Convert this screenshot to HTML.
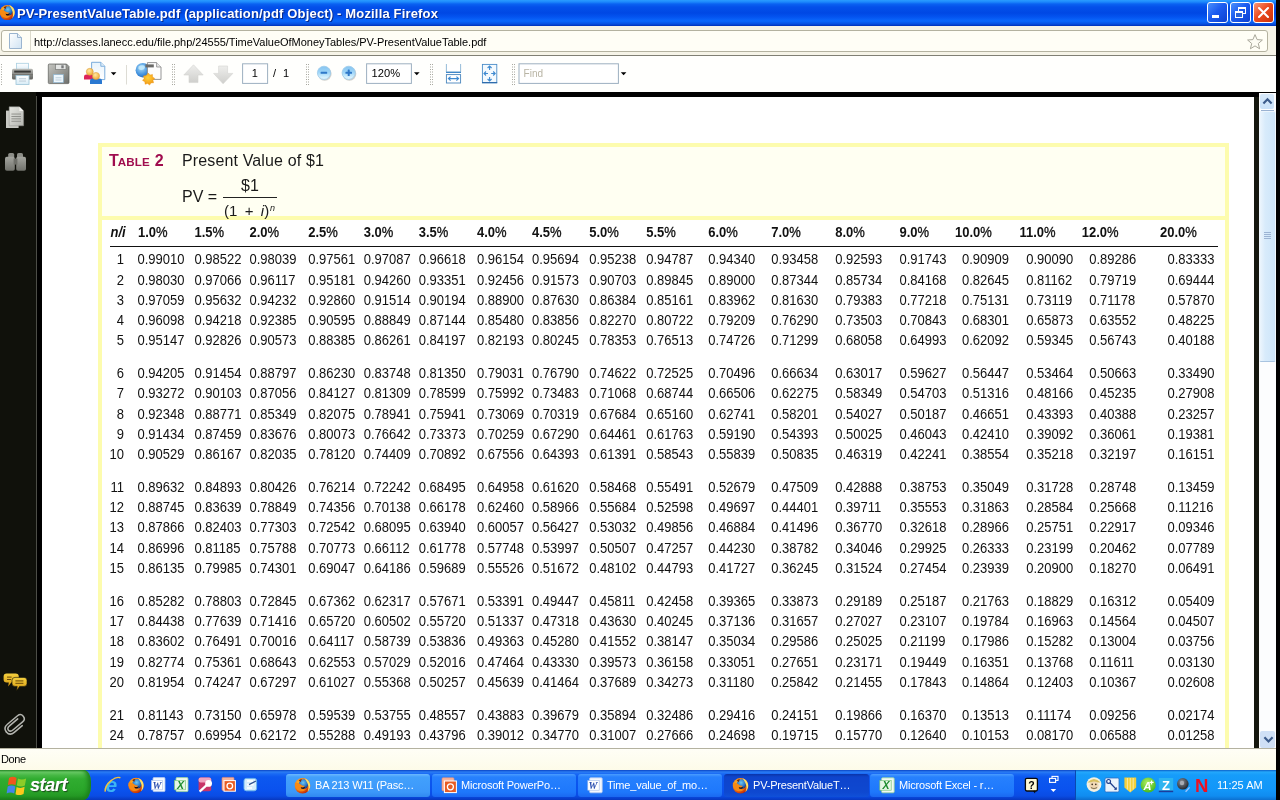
<!DOCTYPE html>
<html lang="en">
<head>
<meta charset="utf-8">
<title>PV-PresentValueTable.pdf (application/pdf Object) - Mozilla Firefox</title>
<style>
*{box-sizing:border-box;margin:0;padding:0}
html,body{width:1280px;height:800px;overflow:hidden;background:#000}
body{position:relative;font-family:"Liberation Sans",sans-serif;font-size:11px;color:#000}
.abs{position:absolute}
#win{position:absolute;left:0;top:0;width:1276px;height:770px;background:#fdfdf8;overflow:hidden}
#titlebar{position:absolute;left:0;top:0;width:1276px;height:26px;
 background:linear-gradient(to bottom,#2a9cff 0,#1c88fc 2px,#0a62f2 4px,#0450ea 7px,#0048e4 13px,#0454f0 17px,#0a68fc 21px,#0650e0 24px,#0030b8 26px)}
#title{position:absolute;left:17px;top:5.6px;height:16px;line-height:16px;color:#fff;font-weight:bold;font-size:13px;white-space:nowrap;letter-spacing:0.165px;text-shadow:1px 1px 0 #0a2a8a}
.wb{position:absolute;top:2px;width:21px;height:21px;border:1px solid #fff;border-radius:3px;
 background:linear-gradient(135deg,#4a90fc 0,#1c5cf0 45%,#0c40d0 100%)}
#wclose{background:linear-gradient(135deg,#f89878 0,#ec4c20 45%,#cc3008 100%)}
#urlbar{position:absolute;left:0;top:26px;width:1276px;height:30px;background:#f6f4e8;border-bottom:1px solid #807f74}
#urlfield{position:absolute;left:1px;top:4px;width:1267px;height:22px;background:#fffef6;border:1px solid #b4b2a0;border-radius:3px}
#urltext{position:absolute;left:34px;top:9px;height:14px;line-height:14px;font-size:11px;white-space:nowrap;color:#000;letter-spacing:-0.02px}
#toolbar{position:absolute;left:0;top:56px;width:1276px;height:36px;background:#fffffd}
#pdfarea{position:absolute;left:0;top:92px;width:1276px;height:656px;background:#000;overflow:hidden}
#rb{position:absolute;left:1254px;top:5px;width:5px;height:651px;background:#15170f}
#side{position:absolute;left:0;top:0;width:36px;height:656px;background:#10110b}
#sideline{position:absolute;left:36px;top:4px;width:1px;height:652px;background:#4c4d47}
#page{position:absolute;left:42px;top:5px;width:1212px;height:651px;background:#fff;overflow:hidden}
#scroll{position:absolute;left:1259px;top:1px;width:17px;height:655px;background:#fcfdfe}
#statusbar{position:absolute;left:0;top:748px;width:1276px;height:22px;background:linear-gradient(to bottom,#fffef6 0,#fefdf0 10px,#fdfbe8 22px);border-top:1px solid #b4b2a0}
#statustext{position:absolute;left:1px;top:3px;font-size:11px;line-height:14px;letter-spacing:-0.4px}
/* table (coordinates are page-absolute; #tbl sits at page origin offset) */
#tbl{position:absolute;left:-42px;top:-97px;width:1280px;height:800px;font-size:13px;color:#111}
#yel{position:absolute;left:98px;top:143px;width:1131px;height:620px;border:4px solid #fdfcae;background:#fff}
#cream{position:absolute;left:102px;top:147px;width:1123px;height:70px;background:#fffff2}
#ysep{position:absolute;left:98px;top:216px;width:1131px;height:4px;background:#fdfcae}
#rule{position:absolute;left:109.5px;top:245.7px;width:1108px;height:1.3px;background:#111}
.row,.hdr{position:absolute;left:0;width:1280px;height:20px;line-height:20px;white-space:nowrap;transform:scaleY(1.075);transform-origin:0 50%}
.row .c,.hdr .c{position:absolute;top:0}
.row .n{position:absolute;left:98px;width:26px;text-align:right;top:0}
.hdr{font-weight:bold}
.hdr .ni{font-style:italic}
.hdr i{font-style:normal;font-weight:normal;-webkit-text-stroke:0.3px #111}
#tbar{position:absolute;left:0;top:770px;width:1276px;height:30px;
 background:linear-gradient(to bottom,#0a44c4 0,#2a7cf4 2px,#1868f4 4px,#0c58f0 7px,#0a52ee 20px,#0a4ce4 26px,#0838c0 30px)}
#start{position:absolute;left:0;top:0;width:91px;height:30px;border-radius:0 7px 8px 0/0 12px 14px 0;
 background:linear-gradient(to bottom,#2a8a2a 0,#6ccc68 2px,#48b846 5px,#30ac30 9px,#2aa62a 20px,#249824 26px,#1a7a1a 30px);box-shadow:inset -4px 0 4px -1px #1c801c}
#starttext{position:absolute;left:30px;top:3px;font-size:18px;line-height:24px;font-weight:bold;font-style:italic;color:#fff;text-shadow:1px 1px 1px #1b4d1b,0.4px 0 0 #fff;letter-spacing:-0.4px}
.tb{position:absolute;top:4px;height:23px;border-radius:3px;background:linear-gradient(to bottom,#4a9cff 0,#2680fe 3px,#1e78fc 18px,#1a68f0 23px);color:#fff;font-size:11px;white-space:nowrap;overflow:hidden}
.tb.act{background:linear-gradient(to bottom,#0a34a8 0,#0e44cc 3px,#0e48d0 18px,#1050d8 23px)}
.tb.lite{background:linear-gradient(to bottom,#6cb8fe 0,#42a0fc 3px,#3c98fa 18px,#3088f0 23px)}
.tb span{position:absolute;left:29px;top:4px;line-height:14px;letter-spacing:-0.2px}
#tray{position:absolute;left:1075px;top:0;width:201px;height:30px;
 background:linear-gradient(to bottom,#0c60c8 0,#24a8fc 2px,#169cfa 5px,#1296f8 20px,#108cf0 26px,#0c70d0 30px);border-left:1px solid #0a48b0}
#clock{position:absolute;left:141px;top:8px;color:#fff;font-size:11px;line-height:14px;white-space:nowrap;letter-spacing:0}
#urlsep{position:absolute;left:30px;top:5px;width:1px;height:20px;background:#dcdacb}
#sthumb{position:absolute;left:0;top:18px;width:17px;height:251px;background:linear-gradient(to right,#ecf5fd 0,#d8ebfb 35%,#cde5fa 100%);border:1px solid #eef6fd;border-bottom:1px solid #a9c4e0;border-radius:2px}
#sup{position:absolute;left:1px;top:1px;width:14px;height:15px;background:linear-gradient(to bottom,#d8eafa,#c8e0f8);border-radius:2px}
#sline{position:absolute;left:2px;top:16.5px;width:13px;height:1px;background:#9ab2d2}
#sdn{position:absolute;left:1px;top:638px;width:15px;height:17px;background:#cfe0f6;border-radius:2px}
#sgrip{position:absolute;left:5px;top:139px;width:7px;height:7px;background:repeating-linear-gradient(to bottom,#9cb4d4 0,#9cb4d4 1px,transparent 1px,transparent 2px)}
#t1{position:absolute;left:109.3px;top:150.7px;height:20px;line-height:20px;white-space:nowrap;color:#a00d4e;font-weight:bold;font-size:11.6px;letter-spacing:0.1px;word-spacing:1.6px}
#t1 .T{font-size:16px;letter-spacing:0}
#t1 .sc{margin-left:-1px}
#t2{position:absolute;left:181.6px;top:150.6px;height:20px;line-height:20px;white-space:nowrap;font-size:16px;color:#1a1a1a;letter-spacing:0.14px}
#pv{position:absolute;left:181.6px;top:187px;height:20px;line-height:20px;white-space:nowrap;font-size:16px;color:#1a1a1a}
#num{position:absolute;left:241.3px;top:175.6px;height:20px;line-height:20px;white-space:nowrap;font-size:16px;color:#1a1a1a}
#frac{position:absolute;left:222.8px;top:197px;width:54px;height:1.2px;background:#222}
#den{position:absolute;left:224.4px;top:201.2px;height:20px;line-height:20px;white-space:nowrap;font-size:15px;color:#1a1a1a;word-spacing:3.2px}
#den sup{font-size:9px;font-style:italic;vertical-align:baseline;position:relative;top:-5px;left:0.8px}
#title,#urltext,#statustext,.tb span,#clock,#starttext,#t1,#t2,#pv,#num,#den,.row,.hdr,svg{will-change:transform}
</style>
</head>
<body>

<div id="win">
<svg width="0" height="0" style="position:absolute">
 <defs>
  <radialGradient id="ffo" cx="0.3" cy="0.3" r="0.85"><stop offset="0" stop-color="#ffb428"/><stop offset="0.5" stop-color="#f47a12"/><stop offset="0.85" stop-color="#c83408"/><stop offset="1" stop-color="#6a1a04"/></radialGradient>
  <radialGradient id="ffg" cx="0.45" cy="0.35" r="0.7"><stop offset="0" stop-color="#6cc8f4"/><stop offset="0.6" stop-color="#2a74c8"/><stop offset="1" stop-color="#10306c"/></radialGradient>
  <radialGradient id="qff" cx="0.3" cy="0.3" r="0.85"><stop offset="0" stop-color="#ffb428"/><stop offset="0.5" stop-color="#f47a12"/><stop offset="1" stop-color="#c83408"/></radialGradient>
  <radialGradient id="qfg" cx="0.45" cy="0.35" r="0.7"><stop offset="0" stop-color="#6cc8f4"/><stop offset="1" stop-color="#123a9a"/></radialGradient>
  <symbol id="ff" viewBox="0 0 16 16">
   <circle cx="8" cy="8.3" r="7.3" fill="url(#ffo)"/>
   <circle cx="9" cy="6.7" r="4.5" fill="url(#ffg)"/>
   <path d="M9.8 1.2 C13 1.9 15.3 4.8 15.3 8.3 C15.3 10.7 14.2 12.7 12.5 14 C13.7 12 13.9 9.6 13.2 7.4 C12.5 5.2 11.4 3.2 9.8 1.2 Z" fill="#fbe26a"/>
   <path d="M0.8 5.6 C3 5.2 5.2 6 6.6 7.4 C7.6 8.2 9 8.4 10.2 8 C9.6 9.6 8 10.4 6.4 10.2 C7.4 11.6 9.6 12 11.4 11 C10.2 13.2 7.6 14 5.2 13.2 C2.4 12.2 0.6 9.2 0.8 5.6 Z" fill="#f88a14"/>
   <path d="M6.4 9.3 C7.6 10 9.4 10 10.6 9 C10.2 10.7 8.6 11.5 7 11 Z" fill="#2e0e04"/>
   <path d="M4.4 3.4 C5.4 2.4 6.6 2 7.6 2.2 C6.8 3 6.4 4 6.6 5 C5.8 4.4 5 4 4.4 3.4 Z" fill="#7a2a08"/>
  </symbol>
 </defs>
</svg>

<div id="titlebar">
<svg class="abs" style="left:-1.5px;top:3.5px" width="16.5" height="16.5"><use href="#ff" x="0" y="0" width="16.5" height="16.5"/></svg>
<div id="title">PV-PresentValueTable.pdf (application/pdf Object) - Mozilla Firefox</div>
<div class="wb" id="wmin" style="left:1207px"><i style="position:absolute;left:4px;top:12px;width:7px;height:3px;background:#fff"></i></div>
<div class="wb" id="wmax" style="left:1230px">
 <i style="position:absolute;left:7px;top:4px;width:8px;height:7px;border:1px solid #fff;border-top-width:2px"></i>
 <i style="position:absolute;left:4px;top:8px;width:8px;height:7px;border:1px solid #fff;border-top-width:2px;background:#2a63d8"></i>
</div>
<div class="wb" id="wclose" style="left:1253px">
 <svg class="abs" style="left:0;top:0" width="19" height="19" viewBox="0 0 19 19"><path d="M5 5 L14 14 M14 5 L5 14" stroke="#fff" stroke-width="2.1" stroke-linecap="round"/></svg>
</div>
</div>
<div id="urlbar">
<div id="urlfield"></div>
<div id="urlsep"></div>
<svg class="abs" style="left:8px;top:6px" width="16" height="18" viewBox="0 0 16 18">
 <defs><linearGradient id="pgic" x1="0" y1="0" x2="1" y2="1"><stop offset="0" stop-color="#ffffff"/><stop offset="1" stop-color="#cfe3f3"/></linearGradient></defs>
 <path d="M1.5 1.5 H9.5 L13.5 5.5 V16.5 H1.5 Z" fill="url(#pgic)" stroke="#9ab4cf" stroke-width="1"/>
 <path d="M9.5 1.5 V5.5 H13.5" fill="#e4eef8" stroke="#9ab4cf" stroke-width="1"/>
</svg>
<div id="urltext">http://classes.lanecc.edu/file.php/24555/TimeValueOfMoneyTables/PV-PresentValueTable.pdf</div>
<svg class="abs" style="left:1246px;top:7px" width="18" height="18" viewBox="0 0 18 18">
 <path d="M9 1.6 L11.1 6.6 L16.4 7 L12.3 10.5 L13.6 15.8 L9 12.9 L4.4 15.8 L5.7 10.5 L1.6 7 L6.9 6.6 Z" fill="#fdfcf4" stroke="#a9a79a" stroke-width="1" stroke-linejoin="round"/>
</svg>
</div>
<div id="toolbar">
<svg class="abs" style="left:0;top:0" width="1276" height="36" viewBox="0 56 1276 36">
 <defs>
  <linearGradient id="gGray" x1="0" y1="0" x2="0" y2="1"><stop offset="0" stop-color="#b9bab6"/><stop offset="0.5" stop-color="#8d8e8a"/><stop offset="1" stop-color="#5f605c"/></linearGradient>
  <linearGradient id="gFlop" x1="0" y1="0" x2="1" y2="1"><stop offset="0" stop-color="#c4c5c0"/><stop offset="0.5" stop-color="#9a9b96"/><stop offset="1" stop-color="#6c6d69"/></linearGradient>
  <linearGradient id="gPaper" x1="0" y1="0" x2="0" y2="1"><stop offset="0" stop-color="#ffffff"/><stop offset="1" stop-color="#d8ecf6"/></linearGradient>
  <linearGradient id="gArr" x1="0" y1="0" x2="0" y2="1"><stop offset="0" stop-color="#eeeeec"/><stop offset="1" stop-color="#cfcfcc"/></linearGradient>
  <linearGradient id="gBall" x1="0" y1="0" x2="0" y2="1"><stop offset="0" stop-color="#86c4f0"/><stop offset="0.45" stop-color="#9cd4f8"/><stop offset="0.75" stop-color="#c8eafc"/><stop offset="1" stop-color="#eefaff"/></linearGradient>
  <radialGradient id="gHead" cx="0.4" cy="0.35" r="0.7"><stop offset="0" stop-color="#ffe9a0"/><stop offset="1" stop-color="#f0a830"/></radialGradient>
  <radialGradient id="gGlobe" cx="0.4" cy="0.35" r="0.8"><stop offset="0" stop-color="#a8dcf8"/><stop offset="0.6" stop-color="#3f8fdc"/><stop offset="1" stop-color="#1c58b0"/></radialGradient>
  <radialGradient id="gStar" cx="0.45" cy="0.4" r="0.7"><stop offset="0" stop-color="#ffd23a"/><stop offset="1" stop-color="#f08c0c"/></radialGradient>
  <linearGradient id="gBlu" x1="0" y1="0" x2="0" y2="1"><stop offset="0" stop-color="#e8f4fc"/><stop offset="1" stop-color="#ffffff"/></linearGradient>
 </defs>
 <!-- grippers -->
 <g fill="#a8a8a0">
  <g id="grip1"><rect x="0" y="0" width="1" height="1"/><rect x="0" y="2.5" width="1" height="1"/><rect x="0" y="5" width="1" height="1"/><rect x="0" y="7.5" width="1" height="1"/><rect x="0" y="10" width="1" height="1"/><rect x="0" y="12.5" width="1" height="1"/><rect x="0" y="15" width="1" height="1"/><rect x="0" y="17.5" width="1" height="1"/><rect x="0" y="20" width="1" height="1"/></g>
 </g>
 <use href="#grip1" x="1" y="64" fill="#a8a8a0"/>
 <use href="#grip1" x="172" y="64" fill="#a8a8a0"/><use href="#grip1" x="174" y="64" fill="#a8a8a0"/>
 <use href="#grip1" x="306" y="64" fill="#a8a8a0"/><use href="#grip1" x="308" y="64" fill="#a8a8a0"/>
 <use href="#grip1" x="430" y="64" fill="#a8a8a0"/><use href="#grip1" x="432" y="64" fill="#a8a8a0"/>
 <use href="#grip1" x="512" y="64" fill="#a8a8a0"/><use href="#grip1" x="514" y="64" fill="#a8a8a0"/>
 <!-- printer -->
 <rect x="16.5" y="63.3" width="12" height="7.5" fill="url(#gPaper)" stroke="#a9cfe0" stroke-width="0.8"/>
 <rect x="12" y="68.7" width="21" height="10.8" rx="1.6" fill="url(#gGray)"/>
 <rect x="14.2" y="70.6" width="16.6" height="2" fill="#3a3a38"/>
 <rect x="12" y="74.2" width="21" height="1" fill="#70716d"/>
 <rect x="16" y="75.4" width="13" height="9" fill="url(#gPaper)" stroke="#9cc4d8" stroke-width="0.8"/>
 <rect x="19" y="78.3" width="7" height="0.9" fill="#b8c8d4"/><rect x="19" y="80.6" width="7" height="0.9" fill="#b8c8d4"/>
 <!-- floppy -->
 <path d="M49.3 64 H66.5 L69 66.5 V82.6 Q69 83.6 68 83.6 H49.3 Q48.3 83.6 48.3 82.6 V65 Q48.3 64 49.3 64 Z" fill="url(#gFlop)" stroke="#5a5b58" stroke-width="0.7"/>
 <rect x="55.5" y="64.3" width="10.5" height="5.2" fill="#e4e6e4" stroke="#6a6b68" stroke-width="0.6"/>
 <rect x="61.3" y="65.3" width="2.4" height="3" fill="#77787a"/>
 <rect x="53.5" y="74.6" width="9.8" height="8" fill="#eef7fc" stroke="#8fb6d0" stroke-width="0.7"/>
 <rect x="55.5" y="77.4" width="6" height="0.8" fill="#b4c8d6"/><rect x="55.5" y="79.6" width="6" height="0.8" fill="#b4c8d6"/>
 <!-- people + doc -->
 <path d="M91.6 62.3 H100.8 L104.8 66.3 V79.6 H91.6 Z" fill="url(#gBlu)" stroke="#6da4d8" stroke-width="0.9"/>
 <path d="M100.8 62.3 V66.3 H104.8" fill="#dcecf8" stroke="#6da4d8" stroke-width="0.8"/>
 <path d="M84 79.6 V76.4 Q84 74.4 86.4 74.4 H92.6 Q95 74.4 95 76.4 V79.6 Z" fill="#dc2458"/>
 <circle cx="89.8" cy="71.8" r="3.5" fill="url(#gHead)" stroke="#d89a3c" stroke-width="0.5"/>
 <path d="M90 84 V80.6 Q90 78.6 92.4 78.6 H99.6 Q102 78.6 102 80.6 V84 Z" fill="#2a78d0"/>
 <circle cx="96" cy="76" r="3.6" fill="url(#gHead)" stroke="#d89a3c" stroke-width="0.5"/>
 <path d="M110.8 72.2 H116.4 L113.6 75.2 Z" fill="#000"/>
 <rect x="126" y="65" width="1" height="19.5" fill="#dddcd4"/>
 <!-- globe + doc + star -->
 <circle cx="142.8" cy="70.2" r="7.2" fill="url(#gGlobe)"/>
 <path d="M138.5 66.5 Q141 64.5 144 65.5 Q146 67.5 143.5 69.5 Q140.5 70.5 138.5 69 Z" fill="#c8ecfc" opacity="0.85"/>
 <path d="M147.4 62.6 H156.6 L161 67 V79.4 H147.4 Z" fill="#fdfdfd" stroke="#8a8a8a" stroke-width="0.9"/>
 <path d="M156.6 62.6 V67 H161" fill="#e8e8e8" stroke="#8a8a8a" stroke-width="0.8"/>
 <rect x="145.4" y="64.4" width="8.4" height="3" fill="#6a6a68"/>
 <path d="M148.3 73 L150 75 L152.5 74.4 L152.6 77 L154.8 78.4 L153 80.3 L153.6 82.8 L151 82.9 L149.6 85.1 L147.6 83.5 L145.1 84.3 L144.8 81.7 L142.5 80.4 L144.1 78.4 L143.4 75.9 L146 75.6 Z" fill="url(#gStar)" stroke="#e89418" stroke-width="0.4"/>
 <!-- arrows up/down -->
 <path d="M193.5 64.8 L203.2 75 H198 V82.6 H189 V75 H183.8 Z" fill="url(#gArr)" stroke="#d4d4d0" stroke-width="0.6"/>
 <path d="M218.6 66 H227.6 V73.4 H232.8 L223.1 83.8 L213.6 73.4 H218.6 Z" fill="url(#gArr)" stroke="#d4d4d0" stroke-width="0.6"/>
 <!-- page box -->
 <rect x="242.6" y="63.8" width="25" height="19.6" fill="#fff" stroke="#9db0c0" stroke-width="1"/>
 <text x="254.8" y="76.9" font-family="Liberation Sans, sans-serif" font-size="11" text-anchor="middle" fill="#000">1</text>
 <text x="273" y="76.9" font-family="Liberation Sans, sans-serif" font-size="11" fill="#000">/</text>
 <text x="283" y="76.9" font-family="Liberation Sans, sans-serif" font-size="11" fill="#000">1</text>
 <!-- zoom out / in -->
 <circle cx="324.7" cy="73.8" r="6.9" fill="#c4c4c0" opacity="0.8"/>
 <circle cx="324" cy="72.8" r="6.6" fill="url(#gBall)" stroke="#9ccaea" stroke-width="0.8"/>
 <rect x="320.6" y="71.8" width="6.6" height="2" rx="0.6" fill="#2f78c8"/>
 <circle cx="349.4" cy="73.8" r="6.9" fill="#c4c4c0" opacity="0.8"/>
 <circle cx="348.7" cy="72.8" r="6.6" fill="url(#gBall)" stroke="#9ccaea" stroke-width="0.8"/>
 <rect x="345.4" y="71.8" width="6.6" height="2" rx="0.6" fill="#2f78c8"/><rect x="347.7" y="69.5" width="2" height="6.6" rx="0.6" fill="#2f78c8"/>
 <!-- zoom box -->
 <rect x="366.6" y="63.8" width="44.8" height="19.6" fill="#fff" stroke="#9db0c0" stroke-width="1"/>
 <text x="371.6" y="76.9" font-family="Liberation Sans, sans-serif" font-size="11" fill="#000" textLength="28.5" lengthAdjust="spacingAndGlyphs">120%</text>
 <path d="M414 72.2 H419.6 L416.8 75.2 Z" fill="#000"/>
 <!-- fit width -->
 <path d="M446.4 64 V72 H460.6 V64" fill="#fff" stroke="#8ab4d4" stroke-width="0.9"/>
 <rect x="446" y="71.8" width="15" height="1.2" fill="#3f86c8"/>
 <rect x="446.4" y="74.6" width="14.2" height="8.4" fill="#fff" stroke="#4a86bc" stroke-width="0.9"/>
 <path d="M448.4 78.6 H458.6 M450.6 76.6 L448.4 78.6 L450.6 80.6 M456.4 76.6 L458.6 78.6 L456.4 80.6" fill="none" stroke="#3f8ad0" stroke-width="1.1"/>
 <!-- fit page -->
 <rect x="482.4" y="64.4" width="14.4" height="18.4" fill="#f4fafe" stroke="#4a8cc8" stroke-width="0.9"/>
 <rect x="482" y="82" width="15.2" height="1.2" fill="#2f6cac"/>
 <path d="M489.6 66 V70 M487.6 68 L489.6 66 L491.6 68 M489.6 81 V77 M487.6 79 L489.6 81 L491.6 79 M484 73.5 H488 M486 71.5 L484 73.5 L486 75.5 M495.2 73.5 H491.2 M493.2 71.5 L495.2 73.5 L493.2 75.5" fill="none" stroke="#3f8ad0" stroke-width="1.1"/>
 <!-- find box -->
 <rect x="519" y="63.8" width="99.4" height="19.6" fill="#fff" stroke="#9db0c0" stroke-width="1"/>
 <text x="523.6" y="76.9" font-family="Liberation Sans, sans-serif" font-size="11" fill="#b8b4a4" textLength="19.5" lengthAdjust="spacingAndGlyphs">Find</text>
 <path d="M620.8 72.2 H626.4 L623.6 75.2 Z" fill="#000"/>
</svg>
</div>

<div id="pdfarea">
<div id="side">
<svg class="abs" style="left:0;top:0" width="36" height="656" viewBox="0 92 36 656">
 <defs>
  <linearGradient id="sPg" x1="0" y1="0" x2="1" y2="1"><stop offset="0" stop-color="#e6e7e2"/><stop offset="1" stop-color="#b4b5b0"/></linearGradient>
  <linearGradient id="sBin" x1="0" y1="0" x2="0" y2="1"><stop offset="0" stop-color="#a4a59f"/><stop offset="1" stop-color="#70716b"/></linearGradient>
  <linearGradient id="sCom" x1="0" y1="0" x2="0" y2="1"><stop offset="0" stop-color="#f4d040"/><stop offset="1" stop-color="#d89a10"/></linearGradient>
 </defs>
 <!-- pages -->
 <rect x="6" y="110.6" width="12.6" height="17.4" fill="#c8c9c4"/>
 <path d="M9.2 106.8 H19.4 L23.6 111 V125.8 H9.2 Z" fill="url(#sPg)" stroke="#8e8f8a" stroke-width="0.5"/>
 <path d="M19.4 106.8 V111 H23.6 Z" fill="#f4f4f0"/>
 <g fill="#8a8b86"><rect x="11.4" y="113.6" width="9.6" height="0.9"/><rect x="11.4" y="116" width="9.6" height="0.9"/><rect x="11.4" y="118.4" width="9.6" height="0.9"/><rect x="11.4" y="120.8" width="9.6" height="0.9"/></g>
 <!-- binoculars -->
 <rect x="8.2" y="153" width="6" height="5" rx="1.6" fill="#8c8d87"/>
 <rect x="17" y="153" width="6" height="5" rx="1.6" fill="#8c8d87"/>
 <rect x="5" y="156.8" width="9.8" height="14" rx="1.8" fill="url(#sBin)"/>
 <rect x="16.2" y="156.8" width="9.8" height="14" rx="1.8" fill="url(#sBin)"/>
 <rect x="13.6" y="158.6" width="3.8" height="6" fill="#6e6f69"/>
 <!-- comments -->
 <path d="M6.6 673.4 H15.6 Q18.8 673.4 18.8 676.4 V679.4 Q18.8 682.4 15.6 682.4 H11.2 L8.2 686.6 L8.8 682.4 H6.6 Q3.6 682.4 3.6 679.4 V676.4 Q3.6 673.4 6.6 673.4 Z" fill="url(#sCom)"/>
 <path d="M15 677.4 H24 Q27 677.4 27 680.4 V683.4 Q27 686.4 24 686.4 H19.6 L16.6 690.8 L17.2 686.4 H15 Q12 686.4 12 683.4 V680.4 Q12 677.4 15 677.4 Z" fill="url(#sCom)" stroke="#11120c" stroke-width="0.6"/>
 <rect x="15.4" y="680.4" width="8" height="1" fill="#6a4a08"/><rect x="15.4" y="682.8" width="8" height="1" fill="#6a4a08"/>
 <rect x="7" y="676.6" width="4.6" height="1" fill="#6a4a08"/><rect x="7" y="679" width="4.2" height="1" fill="#6a4a08"/>
 <!-- paperclip -->
 <g transform="translate(15 724) scale(0.9) translate(-15 -724) rotate(-40 15 724)" fill="none" stroke="#b4b5b0" stroke-width="1.7" stroke-linecap="round">
  <path d="M21 721.6 H9.4 Q5 721.6 5 724.6 Q5 727.6 9.4 727.6 H23 Q27.6 727.6 27.6 723.2 Q27.6 718.8 23 718.8 H8.4 Q2 718.8 2 724.6"/>
  <path d="M2 724.6 Q2 730.6 8.4 730.6 H20"/>
 </g>
</svg>
</div>
<div id="sideline"></div>
<div id="rb"></div>
<div id="scroll">
 <div id="sthumb"></div>
 <div id="sup"><svg width="15" height="15" viewBox="1 1 15 15"><path d="M4.4 10.4 L8.5 6.2 L12.6 10.4" fill="none" stroke="#3c5c8c" stroke-width="2.2"/></svg></div>
 <div id="sline"></div>
 <div id="sgrip"></div>
 <div id="sdn"><svg width="17" height="17" viewBox="0 0 17 17"><path d="M4.4 6.2 L8.5 10.4 L12.6 6.2" fill="none" stroke="#3c5c8c" stroke-width="2.2"/></svg></div>
</div>
<div id="page">
<div id="tbl">
<div id="yel"></div>
<div id="cream"></div>
<div id="ysep"></div>
<div id="rule"></div>
<div id="t1"><span class="T">T</span><span class="sc">ABLE</span> <span class="T">2</span></div>
<div id="t2">Present Value of $1</div>
<div id="pv">PV =</div>
<div id="num">$1</div>
<div id="frac"></div>
<div id="den">(1 + <i>i</i>)<sup>n</sup></div>

<div class="hdr" style="top:223.20px">
<span class="c ni" style="left:110.5px">n/i</span>
<span class="c" style="left:138.0px">1.0<i>%</i></span>
<span class="c" style="left:194.5px">1.5<i>%</i></span>
<span class="c" style="left:249.5px">2.0<i>%</i></span>
<span class="c" style="left:308.2px">2.5<i>%</i></span>
<span class="c" style="left:363.7px">3.0<i>%</i></span>
<span class="c" style="left:418.7px">3.5<i>%</i></span>
<span class="c" style="left:477.0px">4.0<i>%</i></span>
<span class="c" style="left:532.0px">4.5<i>%</i></span>
<span class="c" style="left:589.2px">5.0<i>%</i></span>
<span class="c" style="left:646.2px">5.5<i>%</i></span>
<span class="c" style="left:708.2px">6.0<i>%</i></span>
<span class="c" style="left:771.2px">7.0<i>%</i></span>
<span class="c" style="left:835.2px">8.0<i>%</i></span>
<span class="c" style="left:899.5px">9.0<i>%</i></span>
<span class="c" style="left:955.0px">10.0<i>%</i></span>
<span class="c" style="left:1019.5px">11.0<i>%</i></span>
<span class="c" style="left:1081.7px">12.0<i>%</i></span>
<span class="c" style="left:1160.0px">20.0<i>%</i></span>
</div>
<div class="row" style="top:250.00px">
<span class="n">1</span>
<span class="c" style="left:137.5px">0.99010</span>
<span class="c" style="left:194.5px">0.98522</span>
<span class="c" style="left:249.5px">0.98039</span>
<span class="c" style="left:308.2px">0.97561</span>
<span class="c" style="left:363.7px">0.97087</span>
<span class="c" style="left:418.7px">0.96618</span>
<span class="c" style="left:477.0px">0.96154</span>
<span class="c" style="left:532.0px">0.95694</span>
<span class="c" style="left:589.2px">0.95238</span>
<span class="c" style="left:646.2px">0.94787</span>
<span class="c" style="left:708.2px">0.94340</span>
<span class="c" style="left:771.2px">0.93458</span>
<span class="c" style="left:835.2px">0.92593</span>
<span class="c" style="left:899.5px">0.91743</span>
<span class="c" style="left:962.0px">0.90909</span>
<span class="c" style="left:1026.2px">0.90090</span>
<span class="c" style="left:1089.2px">0.89286</span>
<span class="c" style="left:1167.5px">0.83333</span>
</div>
<div class="row" style="top:271.00px">
<span class="n">2</span>
<span class="c" style="left:137.5px">0.98030</span>
<span class="c" style="left:194.5px">0.97066</span>
<span class="c" style="left:249.5px">0.96117</span>
<span class="c" style="left:308.2px">0.95181</span>
<span class="c" style="left:363.7px">0.94260</span>
<span class="c" style="left:418.7px">0.93351</span>
<span class="c" style="left:477.0px">0.92456</span>
<span class="c" style="left:532.0px">0.91573</span>
<span class="c" style="left:589.2px">0.90703</span>
<span class="c" style="left:646.2px">0.89845</span>
<span class="c" style="left:708.2px">0.89000</span>
<span class="c" style="left:771.2px">0.87344</span>
<span class="c" style="left:835.2px">0.85734</span>
<span class="c" style="left:899.5px">0.84168</span>
<span class="c" style="left:962.0px">0.82645</span>
<span class="c" style="left:1026.2px">0.81162</span>
<span class="c" style="left:1089.2px">0.79719</span>
<span class="c" style="left:1167.5px">0.69444</span>
</div>
<div class="row" style="top:291.00px">
<span class="n">3</span>
<span class="c" style="left:137.5px">0.97059</span>
<span class="c" style="left:194.5px">0.95632</span>
<span class="c" style="left:249.5px">0.94232</span>
<span class="c" style="left:308.2px">0.92860</span>
<span class="c" style="left:363.7px">0.91514</span>
<span class="c" style="left:418.7px">0.90194</span>
<span class="c" style="left:477.0px">0.88900</span>
<span class="c" style="left:532.0px">0.87630</span>
<span class="c" style="left:589.2px">0.86384</span>
<span class="c" style="left:646.2px">0.85161</span>
<span class="c" style="left:708.2px">0.83962</span>
<span class="c" style="left:771.2px">0.81630</span>
<span class="c" style="left:835.2px">0.79383</span>
<span class="c" style="left:899.5px">0.77218</span>
<span class="c" style="left:962.0px">0.75131</span>
<span class="c" style="left:1026.2px">0.73119</span>
<span class="c" style="left:1089.2px">0.71178</span>
<span class="c" style="left:1167.5px">0.57870</span>
</div>
<div class="row" style="top:311.00px">
<span class="n">4</span>
<span class="c" style="left:137.5px">0.96098</span>
<span class="c" style="left:194.5px">0.94218</span>
<span class="c" style="left:249.5px">0.92385</span>
<span class="c" style="left:308.2px">0.90595</span>
<span class="c" style="left:363.7px">0.88849</span>
<span class="c" style="left:418.7px">0.87144</span>
<span class="c" style="left:477.0px">0.85480</span>
<span class="c" style="left:532.0px">0.83856</span>
<span class="c" style="left:589.2px">0.82270</span>
<span class="c" style="left:646.2px">0.80722</span>
<span class="c" style="left:708.2px">0.79209</span>
<span class="c" style="left:771.2px">0.76290</span>
<span class="c" style="left:835.2px">0.73503</span>
<span class="c" style="left:899.5px">0.70843</span>
<span class="c" style="left:962.0px">0.68301</span>
<span class="c" style="left:1026.2px">0.65873</span>
<span class="c" style="left:1089.2px">0.63552</span>
<span class="c" style="left:1167.5px">0.48225</span>
</div>
<div class="row" style="top:331.00px">
<span class="n">5</span>
<span class="c" style="left:137.5px">0.95147</span>
<span class="c" style="left:194.5px">0.92826</span>
<span class="c" style="left:249.5px">0.90573</span>
<span class="c" style="left:308.2px">0.88385</span>
<span class="c" style="left:363.7px">0.86261</span>
<span class="c" style="left:418.7px">0.84197</span>
<span class="c" style="left:477.0px">0.82193</span>
<span class="c" style="left:532.0px">0.80245</span>
<span class="c" style="left:589.2px">0.78353</span>
<span class="c" style="left:646.2px">0.76513</span>
<span class="c" style="left:708.2px">0.74726</span>
<span class="c" style="left:771.2px">0.71299</span>
<span class="c" style="left:835.2px">0.68058</span>
<span class="c" style="left:899.5px">0.64993</span>
<span class="c" style="left:962.0px">0.62092</span>
<span class="c" style="left:1026.2px">0.59345</span>
<span class="c" style="left:1089.2px">0.56743</span>
<span class="c" style="left:1167.5px">0.40188</span>
</div>
<div class="row" style="top:364.00px">
<span class="n">6</span>
<span class="c" style="left:137.5px">0.94205</span>
<span class="c" style="left:194.5px">0.91454</span>
<span class="c" style="left:249.5px">0.88797</span>
<span class="c" style="left:308.2px">0.86230</span>
<span class="c" style="left:363.7px">0.83748</span>
<span class="c" style="left:418.7px">0.81350</span>
<span class="c" style="left:477.0px">0.79031</span>
<span class="c" style="left:532.0px">0.76790</span>
<span class="c" style="left:589.2px">0.74622</span>
<span class="c" style="left:646.2px">0.72525</span>
<span class="c" style="left:708.2px">0.70496</span>
<span class="c" style="left:771.2px">0.66634</span>
<span class="c" style="left:835.2px">0.63017</span>
<span class="c" style="left:899.5px">0.59627</span>
<span class="c" style="left:962.0px">0.56447</span>
<span class="c" style="left:1026.2px">0.53464</span>
<span class="c" style="left:1089.2px">0.50663</span>
<span class="c" style="left:1167.5px">0.33490</span>
</div>
<div class="row" style="top:384.00px">
<span class="n">7</span>
<span class="c" style="left:137.5px">0.93272</span>
<span class="c" style="left:194.5px">0.90103</span>
<span class="c" style="left:249.5px">0.87056</span>
<span class="c" style="left:308.2px">0.84127</span>
<span class="c" style="left:363.7px">0.81309</span>
<span class="c" style="left:418.7px">0.78599</span>
<span class="c" style="left:477.0px">0.75992</span>
<span class="c" style="left:532.0px">0.73483</span>
<span class="c" style="left:589.2px">0.71068</span>
<span class="c" style="left:646.2px">0.68744</span>
<span class="c" style="left:708.2px">0.66506</span>
<span class="c" style="left:771.2px">0.62275</span>
<span class="c" style="left:835.2px">0.58349</span>
<span class="c" style="left:899.5px">0.54703</span>
<span class="c" style="left:962.0px">0.51316</span>
<span class="c" style="left:1026.2px">0.48166</span>
<span class="c" style="left:1089.2px">0.45235</span>
<span class="c" style="left:1167.5px">0.27908</span>
</div>
<div class="row" style="top:405.00px">
<span class="n">8</span>
<span class="c" style="left:137.5px">0.92348</span>
<span class="c" style="left:194.5px">0.88771</span>
<span class="c" style="left:249.5px">0.85349</span>
<span class="c" style="left:308.2px">0.82075</span>
<span class="c" style="left:363.7px">0.78941</span>
<span class="c" style="left:418.7px">0.75941</span>
<span class="c" style="left:477.0px">0.73069</span>
<span class="c" style="left:532.0px">0.70319</span>
<span class="c" style="left:589.2px">0.67684</span>
<span class="c" style="left:646.2px">0.65160</span>
<span class="c" style="left:708.2px">0.62741</span>
<span class="c" style="left:771.2px">0.58201</span>
<span class="c" style="left:835.2px">0.54027</span>
<span class="c" style="left:899.5px">0.50187</span>
<span class="c" style="left:962.0px">0.46651</span>
<span class="c" style="left:1026.2px">0.43393</span>
<span class="c" style="left:1089.2px">0.40388</span>
<span class="c" style="left:1167.5px">0.23257</span>
</div>
<div class="row" style="top:425.00px">
<span class="n">9</span>
<span class="c" style="left:137.5px">0.91434</span>
<span class="c" style="left:194.5px">0.87459</span>
<span class="c" style="left:249.5px">0.83676</span>
<span class="c" style="left:308.2px">0.80073</span>
<span class="c" style="left:363.7px">0.76642</span>
<span class="c" style="left:418.7px">0.73373</span>
<span class="c" style="left:477.0px">0.70259</span>
<span class="c" style="left:532.0px">0.67290</span>
<span class="c" style="left:589.2px">0.64461</span>
<span class="c" style="left:646.2px">0.61763</span>
<span class="c" style="left:708.2px">0.59190</span>
<span class="c" style="left:771.2px">0.54393</span>
<span class="c" style="left:835.2px">0.50025</span>
<span class="c" style="left:899.5px">0.46043</span>
<span class="c" style="left:962.0px">0.42410</span>
<span class="c" style="left:1026.2px">0.39092</span>
<span class="c" style="left:1089.2px">0.36061</span>
<span class="c" style="left:1167.5px">0.19381</span>
</div>
<div class="row" style="top:445.00px">
<span class="n">10</span>
<span class="c" style="left:137.5px">0.90529</span>
<span class="c" style="left:194.5px">0.86167</span>
<span class="c" style="left:249.5px">0.82035</span>
<span class="c" style="left:308.2px">0.78120</span>
<span class="c" style="left:363.7px">0.74409</span>
<span class="c" style="left:418.7px">0.70892</span>
<span class="c" style="left:477.0px">0.67556</span>
<span class="c" style="left:532.0px">0.64393</span>
<span class="c" style="left:589.2px">0.61391</span>
<span class="c" style="left:646.2px">0.58543</span>
<span class="c" style="left:708.2px">0.55839</span>
<span class="c" style="left:771.2px">0.50835</span>
<span class="c" style="left:835.2px">0.46319</span>
<span class="c" style="left:899.5px">0.42241</span>
<span class="c" style="left:962.0px">0.38554</span>
<span class="c" style="left:1026.2px">0.35218</span>
<span class="c" style="left:1089.2px">0.32197</span>
<span class="c" style="left:1167.5px">0.16151</span>
</div>
<div class="row" style="top:478.00px">
<span class="n">11</span>
<span class="c" style="left:137.5px">0.89632</span>
<span class="c" style="left:194.5px">0.84893</span>
<span class="c" style="left:249.5px">0.80426</span>
<span class="c" style="left:308.2px">0.76214</span>
<span class="c" style="left:363.7px">0.72242</span>
<span class="c" style="left:418.7px">0.68495</span>
<span class="c" style="left:477.0px">0.64958</span>
<span class="c" style="left:532.0px">0.61620</span>
<span class="c" style="left:589.2px">0.58468</span>
<span class="c" style="left:646.2px">0.55491</span>
<span class="c" style="left:708.2px">0.52679</span>
<span class="c" style="left:771.2px">0.47509</span>
<span class="c" style="left:835.2px">0.42888</span>
<span class="c" style="left:899.5px">0.38753</span>
<span class="c" style="left:962.0px">0.35049</span>
<span class="c" style="left:1026.2px">0.31728</span>
<span class="c" style="left:1089.2px">0.28748</span>
<span class="c" style="left:1167.5px">0.13459</span>
</div>
<div class="row" style="top:498.00px">
<span class="n">12</span>
<span class="c" style="left:137.5px">0.88745</span>
<span class="c" style="left:194.5px">0.83639</span>
<span class="c" style="left:249.5px">0.78849</span>
<span class="c" style="left:308.2px">0.74356</span>
<span class="c" style="left:363.7px">0.70138</span>
<span class="c" style="left:418.7px">0.66178</span>
<span class="c" style="left:477.0px">0.62460</span>
<span class="c" style="left:532.0px">0.58966</span>
<span class="c" style="left:589.2px">0.55684</span>
<span class="c" style="left:646.2px">0.52598</span>
<span class="c" style="left:708.2px">0.49697</span>
<span class="c" style="left:771.2px">0.44401</span>
<span class="c" style="left:835.2px">0.39711</span>
<span class="c" style="left:899.5px">0.35553</span>
<span class="c" style="left:962.0px">0.31863</span>
<span class="c" style="left:1026.2px">0.28584</span>
<span class="c" style="left:1089.2px">0.25668</span>
<span class="c" style="left:1167.5px">0.11216</span>
</div>
<div class="row" style="top:518.00px">
<span class="n">13</span>
<span class="c" style="left:137.5px">0.87866</span>
<span class="c" style="left:194.5px">0.82403</span>
<span class="c" style="left:249.5px">0.77303</span>
<span class="c" style="left:308.2px">0.72542</span>
<span class="c" style="left:363.7px">0.68095</span>
<span class="c" style="left:418.7px">0.63940</span>
<span class="c" style="left:477.0px">0.60057</span>
<span class="c" style="left:532.0px">0.56427</span>
<span class="c" style="left:589.2px">0.53032</span>
<span class="c" style="left:646.2px">0.49856</span>
<span class="c" style="left:708.2px">0.46884</span>
<span class="c" style="left:771.2px">0.41496</span>
<span class="c" style="left:835.2px">0.36770</span>
<span class="c" style="left:899.5px">0.32618</span>
<span class="c" style="left:962.0px">0.28966</span>
<span class="c" style="left:1026.2px">0.25751</span>
<span class="c" style="left:1089.2px">0.22917</span>
<span class="c" style="left:1167.5px">0.09346</span>
</div>
<div class="row" style="top:539.00px">
<span class="n">14</span>
<span class="c" style="left:137.5px">0.86996</span>
<span class="c" style="left:194.5px">0.81185</span>
<span class="c" style="left:249.5px">0.75788</span>
<span class="c" style="left:308.2px">0.70773</span>
<span class="c" style="left:363.7px">0.66112</span>
<span class="c" style="left:418.7px">0.61778</span>
<span class="c" style="left:477.0px">0.57748</span>
<span class="c" style="left:532.0px">0.53997</span>
<span class="c" style="left:589.2px">0.50507</span>
<span class="c" style="left:646.2px">0.47257</span>
<span class="c" style="left:708.2px">0.44230</span>
<span class="c" style="left:771.2px">0.38782</span>
<span class="c" style="left:835.2px">0.34046</span>
<span class="c" style="left:899.5px">0.29925</span>
<span class="c" style="left:962.0px">0.26333</span>
<span class="c" style="left:1026.2px">0.23199</span>
<span class="c" style="left:1089.2px">0.20462</span>
<span class="c" style="left:1167.5px">0.07789</span>
</div>
<div class="row" style="top:559.00px">
<span class="n">15</span>
<span class="c" style="left:137.5px">0.86135</span>
<span class="c" style="left:194.5px">0.79985</span>
<span class="c" style="left:249.5px">0.74301</span>
<span class="c" style="left:308.2px">0.69047</span>
<span class="c" style="left:363.7px">0.64186</span>
<span class="c" style="left:418.7px">0.59689</span>
<span class="c" style="left:477.0px">0.55526</span>
<span class="c" style="left:532.0px">0.51672</span>
<span class="c" style="left:589.2px">0.48102</span>
<span class="c" style="left:646.2px">0.44793</span>
<span class="c" style="left:708.2px">0.41727</span>
<span class="c" style="left:771.2px">0.36245</span>
<span class="c" style="left:835.2px">0.31524</span>
<span class="c" style="left:899.5px">0.27454</span>
<span class="c" style="left:962.0px">0.23939</span>
<span class="c" style="left:1026.2px">0.20900</span>
<span class="c" style="left:1089.2px">0.18270</span>
<span class="c" style="left:1167.5px">0.06491</span>
</div>
<div class="row" style="top:592.00px">
<span class="n">16</span>
<span class="c" style="left:137.5px">0.85282</span>
<span class="c" style="left:194.5px">0.78803</span>
<span class="c" style="left:249.5px">0.72845</span>
<span class="c" style="left:308.2px">0.67362</span>
<span class="c" style="left:363.7px">0.62317</span>
<span class="c" style="left:418.7px">0.57671</span>
<span class="c" style="left:477.0px">0.53391</span>
<span class="c" style="left:532.0px">0.49447</span>
<span class="c" style="left:589.2px">0.45811</span>
<span class="c" style="left:646.2px">0.42458</span>
<span class="c" style="left:708.2px">0.39365</span>
<span class="c" style="left:771.2px">0.33873</span>
<span class="c" style="left:835.2px">0.29189</span>
<span class="c" style="left:899.5px">0.25187</span>
<span class="c" style="left:962.0px">0.21763</span>
<span class="c" style="left:1026.2px">0.18829</span>
<span class="c" style="left:1089.2px">0.16312</span>
<span class="c" style="left:1167.5px">0.05409</span>
</div>
<div class="row" style="top:612.00px">
<span class="n">17</span>
<span class="c" style="left:137.5px">0.84438</span>
<span class="c" style="left:194.5px">0.77639</span>
<span class="c" style="left:249.5px">0.71416</span>
<span class="c" style="left:308.2px">0.65720</span>
<span class="c" style="left:363.7px">0.60502</span>
<span class="c" style="left:418.7px">0.55720</span>
<span class="c" style="left:477.0px">0.51337</span>
<span class="c" style="left:532.0px">0.47318</span>
<span class="c" style="left:589.2px">0.43630</span>
<span class="c" style="left:646.2px">0.40245</span>
<span class="c" style="left:708.2px">0.37136</span>
<span class="c" style="left:771.2px">0.31657</span>
<span class="c" style="left:835.2px">0.27027</span>
<span class="c" style="left:899.5px">0.23107</span>
<span class="c" style="left:962.0px">0.19784</span>
<span class="c" style="left:1026.2px">0.16963</span>
<span class="c" style="left:1089.2px">0.14564</span>
<span class="c" style="left:1167.5px">0.04507</span>
</div>
<div class="row" style="top:632.00px">
<span class="n">18</span>
<span class="c" style="left:137.5px">0.83602</span>
<span class="c" style="left:194.5px">0.76491</span>
<span class="c" style="left:249.5px">0.70016</span>
<span class="c" style="left:308.2px">0.64117</span>
<span class="c" style="left:363.7px">0.58739</span>
<span class="c" style="left:418.7px">0.53836</span>
<span class="c" style="left:477.0px">0.49363</span>
<span class="c" style="left:532.0px">0.45280</span>
<span class="c" style="left:589.2px">0.41552</span>
<span class="c" style="left:646.2px">0.38147</span>
<span class="c" style="left:708.2px">0.35034</span>
<span class="c" style="left:771.2px">0.29586</span>
<span class="c" style="left:835.2px">0.25025</span>
<span class="c" style="left:899.5px">0.21199</span>
<span class="c" style="left:962.0px">0.17986</span>
<span class="c" style="left:1026.2px">0.15282</span>
<span class="c" style="left:1089.2px">0.13004</span>
<span class="c" style="left:1167.5px">0.03756</span>
</div>
<div class="row" style="top:653.00px">
<span class="n">19</span>
<span class="c" style="left:137.5px">0.82774</span>
<span class="c" style="left:194.5px">0.75361</span>
<span class="c" style="left:249.5px">0.68643</span>
<span class="c" style="left:308.2px">0.62553</span>
<span class="c" style="left:363.7px">0.57029</span>
<span class="c" style="left:418.7px">0.52016</span>
<span class="c" style="left:477.0px">0.47464</span>
<span class="c" style="left:532.0px">0.43330</span>
<span class="c" style="left:589.2px">0.39573</span>
<span class="c" style="left:646.2px">0.36158</span>
<span class="c" style="left:708.2px">0.33051</span>
<span class="c" style="left:771.2px">0.27651</span>
<span class="c" style="left:835.2px">0.23171</span>
<span class="c" style="left:899.5px">0.19449</span>
<span class="c" style="left:962.0px">0.16351</span>
<span class="c" style="left:1026.2px">0.13768</span>
<span class="c" style="left:1089.2px">0.11611</span>
<span class="c" style="left:1167.5px">0.03130</span>
</div>
<div class="row" style="top:673.00px">
<span class="n">20</span>
<span class="c" style="left:137.5px">0.81954</span>
<span class="c" style="left:194.5px">0.74247</span>
<span class="c" style="left:249.5px">0.67297</span>
<span class="c" style="left:308.2px">0.61027</span>
<span class="c" style="left:363.7px">0.55368</span>
<span class="c" style="left:418.7px">0.50257</span>
<span class="c" style="left:477.0px">0.45639</span>
<span class="c" style="left:532.0px">0.41464</span>
<span class="c" style="left:589.2px">0.37689</span>
<span class="c" style="left:646.2px">0.34273</span>
<span class="c" style="left:708.2px">0.31180</span>
<span class="c" style="left:771.2px">0.25842</span>
<span class="c" style="left:835.2px">0.21455</span>
<span class="c" style="left:899.5px">0.17843</span>
<span class="c" style="left:962.0px">0.14864</span>
<span class="c" style="left:1026.2px">0.12403</span>
<span class="c" style="left:1089.2px">0.10367</span>
<span class="c" style="left:1167.5px">0.02608</span>
</div>
<div class="row" style="top:706.00px">
<span class="n">21</span>
<span class="c" style="left:137.5px">0.81143</span>
<span class="c" style="left:194.5px">0.73150</span>
<span class="c" style="left:249.5px">0.65978</span>
<span class="c" style="left:308.2px">0.59539</span>
<span class="c" style="left:363.7px">0.53755</span>
<span class="c" style="left:418.7px">0.48557</span>
<span class="c" style="left:477.0px">0.43883</span>
<span class="c" style="left:532.0px">0.39679</span>
<span class="c" style="left:589.2px">0.35894</span>
<span class="c" style="left:646.2px">0.32486</span>
<span class="c" style="left:708.2px">0.29416</span>
<span class="c" style="left:771.2px">0.24151</span>
<span class="c" style="left:835.2px">0.19866</span>
<span class="c" style="left:899.5px">0.16370</span>
<span class="c" style="left:962.0px">0.13513</span>
<span class="c" style="left:1026.2px">0.11174</span>
<span class="c" style="left:1089.2px">0.09256</span>
<span class="c" style="left:1167.5px">0.02174</span>
</div>
<div class="row" style="top:726.00px">
<span class="n">24</span>
<span class="c" style="left:137.5px">0.78757</span>
<span class="c" style="left:194.5px">0.69954</span>
<span class="c" style="left:249.5px">0.62172</span>
<span class="c" style="left:308.2px">0.55288</span>
<span class="c" style="left:363.7px">0.49193</span>
<span class="c" style="left:418.7px">0.43796</span>
<span class="c" style="left:477.0px">0.39012</span>
<span class="c" style="left:532.0px">0.34770</span>
<span class="c" style="left:589.2px">0.31007</span>
<span class="c" style="left:646.2px">0.27666</span>
<span class="c" style="left:708.2px">0.24698</span>
<span class="c" style="left:771.2px">0.19715</span>
<span class="c" style="left:835.2px">0.15770</span>
<span class="c" style="left:899.5px">0.12640</span>
<span class="c" style="left:962.0px">0.10153</span>
<span class="c" style="left:1026.2px">0.08170</span>
<span class="c" style="left:1089.2px">0.06588</span>
<span class="c" style="left:1167.5px">0.01258</span>
</div>
</div>
</div>
</div>
<div id="statusbar"><div id="statustext">Done</div></div>
</div>

<div id="tbar">
<div id="start">
<svg class="abs" style="left:6px;top:5.5px" width="21" height="19" viewBox="0 0 19 17.5">
 <path d="M2.6 1.8 Q6 -0.2 9.6 1.8 L8.6 8.4 Q5.2 6.6 1.6 8.4 Z" fill="#f0561c"/>
 <path d="M10.8 2.4 Q14.6 4.2 18.4 2.2 L17.2 8.8 Q13.6 10.6 9.8 8.8 Z" fill="#8ccc28"/>
 <path d="M1.4 9.6 Q4.8 7.8 8.4 9.6 L7.4 16.2 Q3.8 14.4 0.4 16.2 Z" fill="#4484ec"/>
 <path d="M9.6 10.2 Q13.4 12 17 10 L16 16.6 Q12.4 18.6 8.6 16.8 Z" fill="#fcc81c"/>
</svg>
<div id="starttext">start</div></div>
<svg class="abs" style="left:100px;top:4px" width="170" height="24" viewBox="100 774 170 24">
 <!-- IE -->
 <text x="105.5" y="791.6" font-family="Liberation Sans, sans-serif" font-size="21" font-weight="bold" font-style="italic" fill="#3cb4f4">e</text>
 <path d="M105.2 791.6 Q104.6 786 111 780.6 Q117 776.2 120.4 777.8" fill="none" stroke="#f0c040" stroke-width="1.5"/>
 <!-- Firefox -->
 <use href="#ff" x="127.6" y="776.8" width="16.8" height="16.8"/>
 <!-- Word -->
 <rect x="153" y="777.6" width="12" height="14" rx="1" fill="#f4f8fe" stroke="#b4c8ec" stroke-width="0.8"/>
 <rect x="151.4" y="780.4" width="11" height="9.4" fill="#fff" stroke="#a4bce8" stroke-width="0.6"/>
 <text x="152.4" y="788.8" font-family="Liberation Serif, serif" font-size="10" font-weight="bold" font-style="italic" fill="#2c50b0">W</text>
 <!-- Excel -->
 <rect x="176" y="777.6" width="12" height="14" rx="1" fill="#f0faf0" stroke="#9cd49c" stroke-width="0.8"/>
 <rect x="174.4" y="780.4" width="11" height="9.4" fill="#e4f6e4" stroke="#6cc06c" stroke-width="0.6"/>
 <text x="177" y="789" font-family="Liberation Sans, sans-serif" font-size="10.5" font-weight="bold" font-style="italic" fill="#1c8c2c">X</text>
 <!-- Access -->
 <rect x="198.6" y="777.6" width="12.6" height="13.6" rx="2" fill="#c83468"/>
 <rect x="198.6" y="777.6" width="12.6" height="5" rx="2" fill="#f0a4c0"/>
 <circle cx="208.6" cy="783.4" r="3.4" fill="#fff"/>
 <path d="M206.4 785.4 L199.6 791.6" stroke="#fff" stroke-width="2.2"/>
 <!-- PowerPoint -->
 <rect x="222" y="777.4" width="12" height="13" rx="1" fill="#f8b49c" stroke="#f08c6c" stroke-width="0.6"/>
 <rect x="224" y="780.6" width="11.4" height="10.6" fill="#e85c24" stroke="#fff" stroke-width="1"/>
 <circle cx="229.8" cy="786" r="2.8" fill="none" stroke="#fff" stroke-width="1.3"/>
 <!-- desktop -->
 <rect x="244" y="778.4" width="12.6" height="12.4" rx="2.4" fill="#d4ecfc" stroke="#6cb4ec" stroke-width="1"/>
 <path d="M247 781 H253 M247 784.6 H253.6 M247 788 H252" stroke="#fff" stroke-width="1.6"/>
 <path d="M249 784.6 L256 781" stroke="#2c4c8c" stroke-width="1.2"/>
</svg>
<div class="tb lite" style="left:286px;width:144px">
 <svg class="abs" style="left:8px;top:3px" width="17" height="17"><use href="#ff" x="0" y="0" width="17" height="17"/></svg>
 <span>BA 213 W11 (Pasc…</span></div>
<div class="tb" style="left:432px;width:144px">
 <svg class="abs" style="left:9px;top:3px" width="17" height="17" viewBox="0 0 17 17"><rect x="1" y="0.8" width="12" height="13" rx="1" fill="#f8b49c" stroke="#f08c6c" stroke-width="0.6"/><rect x="3.4" y="4" width="12" height="11.6" fill="#e85c24" stroke="#fff" stroke-width="1"/><circle cx="9.4" cy="9.8" r="3" fill="none" stroke="#fff" stroke-width="1.3"/></svg>
 <span>Microsoft PowerPo…</span></div>
<div class="tb" style="left:578px;width:144px">
 <svg class="abs" style="left:9px;top:3px" width="17" height="17" viewBox="0 0 17 17"><rect x="2.6" y="0.8" width="12.6" height="15" rx="1" fill="#f4f8fe" stroke="#b4c8ec" stroke-width="0.8"/><rect x="0.8" y="3.6" width="11.4" height="9.6" fill="#fff" stroke="#a4bce8" stroke-width="0.6"/><text x="1.6" y="12" font-family="Liberation Serif, serif" font-size="10" font-weight="bold" font-style="italic" fill="#2c50b0">W</text></svg>
 <span>Time_value_of_mo…</span></div>
<div class="tb act" style="left:724px;width:145px">
 <svg class="abs" style="left:8px;top:3px" width="17" height="17"><use href="#ff" x="0" y="0" width="17" height="17"/></svg>
 <span>PV-PresentValueT…</span></div>
<div class="tb" style="left:870px;width:144px">
 <svg class="abs" style="left:9px;top:3px" width="17" height="17" viewBox="0 0 17 17"><rect x="2.6" y="0.8" width="12.6" height="15" rx="1" fill="#f0faf0" stroke="#9cd49c" stroke-width="0.8"/><rect x="0.8" y="3.6" width="11.4" height="9.6" fill="#e4f6e4" stroke="#6cc06c" stroke-width="0.6"/><text x="3.4" y="12.4" font-family="Liberation Sans, sans-serif" font-size="10.5" font-weight="bold" font-style="italic" fill="#1c8c2c">X</text></svg>
 <span>Microsoft Excel - r…</span></div>
<svg class="abs" style="left:1020px;top:4px" width="50" height="24" viewBox="1020 774 50 24">
 <rect x="1025.4" y="778.4" width="12" height="12.6" rx="1.4" fill="#fdf8d4" stroke="#0a0a0a" stroke-width="1.3"/>
 <path d="M1033 791 L1035 793.4 L1035.6 790.6 Z" fill="#0a0a0a"/>
 <text x="1031.4" y="788.8" font-family="Liberation Sans, sans-serif" font-size="10.5" font-weight="bold" text-anchor="middle" fill="#000">?</text>
 <rect x="1052" y="776.4" width="6" height="4" fill="none" stroke="#fff" stroke-width="1.1"/>
 <rect x="1049.6" y="778.4" width="6" height="4" fill="#1458e0" stroke="#fff" stroke-width="1.1"/>
 <path d="M1050.6 789 H1056.2 L1053.4 792 Z" fill="#fff"/>
</svg>
<div id="tray">
<svg class="abs" style="left:5px;top:4px" width="135" height="24" viewBox="1081 774 135 24">
 <defs>
  <radialGradient id="tgr" cx="0.45" cy="0.35" r="0.7"><stop offset="0" stop-color="#b4f064"/><stop offset="1" stop-color="#3cb418"/></radialGradient>
  <radialGradient id="tdk" cx="0.4" cy="0.35" r="0.7"><stop offset="0" stop-color="#8c9098"/><stop offset="1" stop-color="#1c2028"/></radialGradient>
 </defs>
 <circle cx="1094" cy="784.6" r="7.4" fill="#f4f0e0"/>
 <path d="M1087.4 782.6 Q1094 775.6 1100.6 782.6 Z" fill="#d8c060"/>
 <ellipse cx="1094" cy="785.4" rx="4.6" ry="4" fill="#f0d8b4"/>
 <circle cx="1092.2" cy="784.4" r="0.8" fill="#3c3020"/><circle cx="1095.8" cy="784.4" r="0.8" fill="#3c3020"/>
 <path d="M1091 787.6 Q1094 789.6 1097 787.6" stroke="#8c7c5c" stroke-width="1.2" fill="none"/>
 <rect x="1105" y="778" width="14" height="14" rx="1.2" fill="#e8f2fc" stroke="#2c6cc0" stroke-width="0.8"/>
 <circle cx="1108.6" cy="781.4" r="1.9" fill="none" stroke="#1c3c8c" stroke-width="1.2"/>
 <path d="M1110 782.8 L1116.6 789.6 M1114.6 789.8 L1116.8 787.6" stroke="#1c3c8c" stroke-width="1.3" fill="none"/>
 <path d="M1124.4 777.6 H1136.2 V787.6 L1130.3 792.4 L1124.4 787.6 Z" fill="#f4d03c"/>
 <path d="M1127.4 778 V789.6 M1130.3 778 V791.6 M1133.2 778 V789.6" stroke="#f8e89c" stroke-width="1.1"/>
 <circle cx="1148.2" cy="785" r="7.6" fill="url(#tgr)"/>
 <text x="1143.6" y="789.6" font-family="Liberation Sans, sans-serif" font-size="11" font-weight="bold" font-style="italic" fill="#fff">A</text>
 <path d="M1151.6 780.4 V784.4 M1149.6 782.4 H1153.6" stroke="#fff" stroke-width="1.1"/>
 <rect x="1158.8" y="778" width="14.4" height="13.6" fill="#2cb4f0"/>
 <rect x="1158.8" y="790.6" width="14.4" height="1.6" fill="#1c3c9c"/>
 <text x="1166" y="789.6" font-family="Liberation Sans, sans-serif" font-size="13" font-weight="bold" text-anchor="middle" fill="#fff">Z</text>
 <circle cx="1182.8" cy="783.8" r="5.8" fill="url(#tdk)"/>
 <circle cx="1182" cy="783" r="2.2" fill="#a8acb4"/>
 <path d="M1185.6 791.8 L1189.6 787.4" stroke="#9cc4fc" stroke-width="1.4"/>
 <text x="1195" y="792" font-family="Liberation Sans, sans-serif" font-size="17.5" font-weight="bold" fill="#f01020" textLength="13.4" lengthAdjust="spacingAndGlyphs">N</text>
</svg>
<div id="clock">11:25 AM</div></div>
</div>

</body>
</html>
